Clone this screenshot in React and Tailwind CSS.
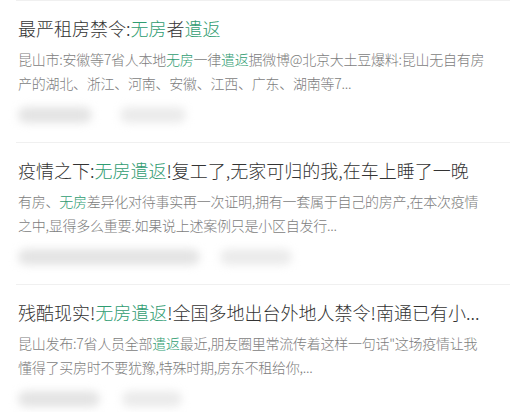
import React from 'react';

const G = ({ children }) => <span className="text-[#2f9c71]">{children}</span>;

const items = [
  {
    title: (
      <>
        最严租房禁令:<G>无房</G>者<G>遣返</G>
      </>
    ),
    line1: (
      <>
        昆山市:安徽等7省人本地<G>无房</G>一律<G>遣返</G>据微博@北京大土豆爆料:昆山无自有房
      </>
    ),
    line2: '产的湖北、浙江、河南、安徽、江西、广东、湖南等7...',
    bars: ['w-[74px]', 'w-[66px]'],
    gap: 'gap-[28px]',
  },
  {
    title: (
      <>
        疫情之下:<G>无房遣返</G>!复工了,无家可归的我,在车上睡了一晚
      </>
    ),
    line1: (
      <>
        有房、<G>无房</G>差异化对待事实再一次证明,拥有一套属于自己的房产,在本次疫情
      </>
    ),
    line2: '之中,显得多么重要.如果说上述案例只是小区自发行...',
    bars: ['w-[182px]', 'w-[72px]'],
    gap: 'gap-[20px]',
  },
  {
    title: (
      <>
        残酷现实!<G>无房遣返</G>!全国多地出台外地人禁令!南通已有小...
      </>
    ),
    line1: (
      <>
        昆山发布:7省人员全部<G>遣返</G>最近,朋友圈里常流传着这样一句话"这场疫情让我
      </>
    ),
    line2: '懂得了买房时不要犹豫,特殊时期,房东不租给你,...',
    bars: ['w-[82px]', 'w-[60px]'],
    gap: 'gap-[22px]',
  },
];

export default function App() {
  return (
    <div
      className="h-[412px] w-[510px] overflow-hidden bg-white font-light"
      style={{ fontFamily: '"Noto Sans CJK SC", "Noto Sans", sans-serif' }}
    >
      {items.map((it, i) => (
        <div key={i} className="ml-4 border-t border-[#f0f0f0] pl-[2px] pt-[14px] pb-[19px]">
          <div className="whitespace-nowrap text-[18px] leading-[26px] text-[#333]">{it.title}</div>
          <div className="mt-[6px] whitespace-nowrap text-[14px] leading-[24px] tracking-[-0.25px] text-[#7d7d7d]">
            <div>{it.line1}</div>
            <div>{it.line2}</div>
          </div>
          <div className={`mt-[12px] flex h-[16px] items-center ${it.gap}`}>
            <div className={`h-[16px] rounded-full bg-[#e4e4e4] blur-[4px] ${it.bars[0]}`} />
            <div className={`h-[16px] rounded-full bg-[#ebebeb] blur-[4px] ${it.bars[1]}`} />
          </div>
        </div>
      ))}
    </div>
  );
}
